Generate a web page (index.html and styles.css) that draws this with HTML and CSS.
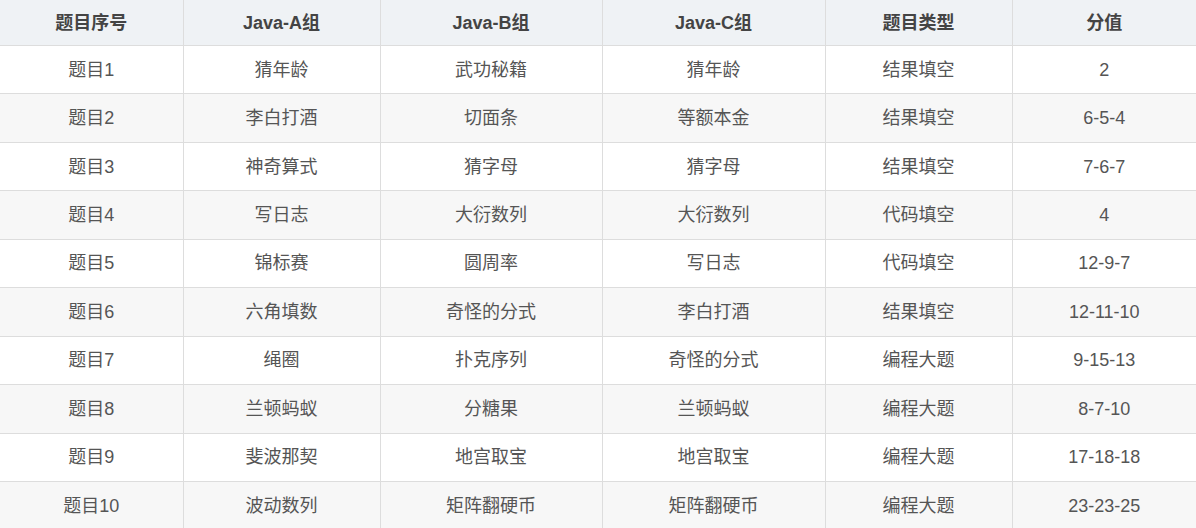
FILE: index.html
```html
<!DOCTYPE html>
<html lang="zh-CN">
<head>
<meta charset="utf-8">
<title>蓝桥杯题目</title>
<link rel="stylesheet" href="styles.css">
</head>
<body>
<table class="grid">
  <colgroup>
    <col class="c1"><col class="c2"><col class="c3"><col class="c4"><col class="c5"><col class="c6">
  </colgroup>
  <thead>
    <tr><th>题目序号</th><th>Java-A组</th><th>Java-B组</th><th>Java-C组</th><th>题目类型</th><th>分值</th></tr>
  </thead>
  <tbody>
    <tr><td>题目1</td><td>猜年龄</td><td>武功秘籍</td><td>猜年龄</td><td>结果填空</td><td>2</td></tr>
    <tr><td>题目2</td><td>李白打酒</td><td>切面条</td><td>等额本金</td><td>结果填空</td><td>6-5-4</td></tr>
    <tr><td>题目3</td><td>神奇算式</td><td>猜字母</td><td>猜字母</td><td>结果填空</td><td>7-6-7</td></tr>
    <tr><td>题目4</td><td>写日志</td><td>大衍数列</td><td>大衍数列</td><td>代码填空</td><td>4</td></tr>
    <tr><td>题目5</td><td>锦标赛</td><td>圆周率</td><td>写日志</td><td>代码填空</td><td>12-9-7</td></tr>
    <tr><td>题目6</td><td>六角填数</td><td>奇怪的分式</td><td>李白打酒</td><td>结果填空</td><td>12-11-10</td></tr>
    <tr><td>题目7</td><td>绳圈</td><td>扑克序列</td><td>奇怪的分式</td><td>编程大题</td><td>9-15-13</td></tr>
    <tr><td>题目8</td><td>兰顿蚂蚁</td><td>分糖果</td><td>兰顿蚂蚁</td><td>编程大题</td><td>8-7-10</td></tr>
    <tr><td>题目9</td><td>斐波那契</td><td>地宫取宝</td><td>地宫取宝</td><td>编程大题</td><td>17-18-18</td></tr>
    <tr><td>题目10</td><td>波动数列</td><td>矩阵翻硬币</td><td>矩阵翻硬币</td><td>编程大题</td><td>23-23-25</td></tr>
  </tbody>
</table>
</body>
</html>
```
FILE: styles.css
```css
html, body {
  margin: 0;
  padding: 0;
  background: #ffffff;
}
body {
  font-family: "Liberation Sans", "Noto Sans CJK SC", sans-serif;
  color: #555555;
  overflow: hidden;
}
.grid {
  width: 1196px;
  border-collapse: collapse;
  table-layout: fixed;
  font-size: 18px;
}
.c1 { width: 183px; }
.c2 { width: 197px; }
.c3 { width: 222px; }
.c4 { width: 223px; }
.c5 { width: 187px; }
.c6 { width: 184px; }
.grid th,
.grid td {
  padding: 0;
  text-align: center;
  vertical-align: middle;
  border-left: 1px solid #dddddd;
  border-bottom: 1px solid #dddddd;
  line-height: 24px;
}
.grid th:first-child,
.grid td:first-child {
  border-left: none;
}
.grid th {
  height: 45px;
  background: #eff2f5;
  color: #444444;
  font-weight: bold;
}
.grid td {
  height: 47.45px;
}
.grid tbody tr:nth-child(even) td {
  background: #f7f7f7;
}
```
